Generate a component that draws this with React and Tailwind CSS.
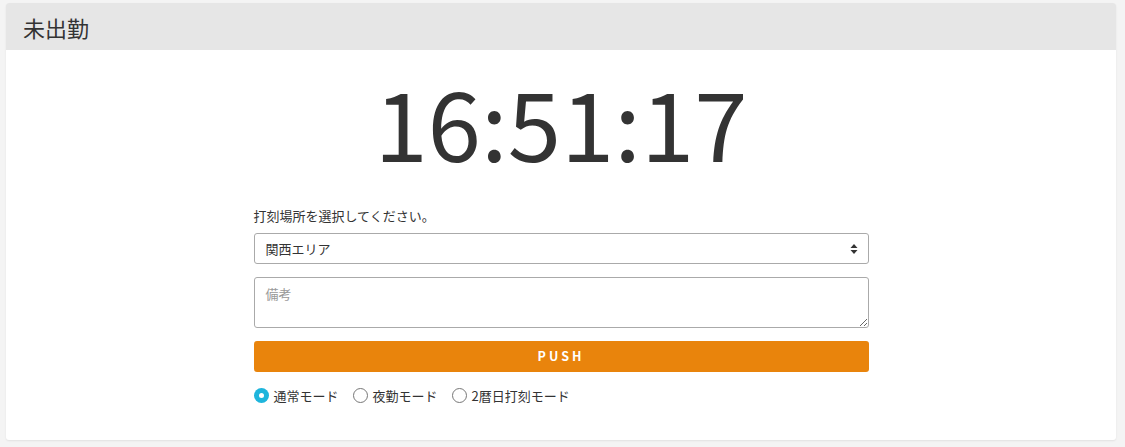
import { useState } from 'react';

const modes = ['通常モード', '夜勤モード', '2暦日打刻モード'];

const App = () => {
  const [mode, setMode] = useState(0);

  return (
    <div
      className="min-h-[447px] bg-[#f4f4f4] pt-[3px] pl-[6px] pr-[9px] pb-[7px]"
      style={{ fontFamily: '"Noto Sans CJK JP", "Noto Sans", sans-serif' }}
    >
      <div className="bg-white rounded-[3px] shadow-[0_1px_2px_rgba(0,0,0,0.08)] overflow-hidden">
        {/* Header */}
        <div className="bg-[#e6e6e6] h-[47px] flex items-center px-[17px]">
          <h1 className="text-[22px] text-[#333] leading-none">未出勤</h1>
        </div>

        {/* Clock */}
        <div className="flex justify-center pt-[11px] pb-[20px]">
          <div className="text-[96px] leading-[120px] text-[#333]">16:51:17</div>
        </div>

        <div className="w-[615px] mx-auto pt-[6px] pb-[34px]">
          <p className="text-[13px] text-[#333] leading-[18px] mb-[8px]">打刻場所を選択してください。</p>

          <div className="relative h-[31px] border border-[#aaa] rounded-[3px] flex items-center px-[11px]">
            <span className="text-[13px] text-[#333]">関西エリア</span>
            <svg className="absolute right-[10px] top-1/2 -translate-y-1/2" width="8" height="11" viewBox="0 0 8 11">
              <path d="M4 0.5 L7.5 4.5 H0.5 Z" fill="#333" />
              <path d="M4 10.5 L7.5 6.5 H0.5 Z" fill="#333" />
            </svg>
          </div>

          <textarea
            placeholder="備考"
            className="mt-[13px] block w-full h-[51px] border border-[#aaa] rounded-[3px] px-[11px] py-[6px] text-[13px] text-[#333] placeholder:text-[#999] outline-none"
          />

          <button className="mt-[13px] w-full h-[31px] bg-[#e9840c] rounded-[3px] text-white text-[12.5px] font-bold tracking-[3px]">
            PUSH
          </button>

          <div className="mt-[14px] flex items-center gap-[14px] text-[13px] text-[#333]">
            {modes.map((m, i) => (
              <label key={m} className="flex items-center gap-[5px] cursor-pointer" onClick={() => setMode(i)}>
                {mode === i ? (
                  <span className="w-[15px] h-[15px] rounded-full bg-[#1eb5dc] flex items-center justify-center">
                    <span className="w-[5px] h-[5px] rounded-full bg-white" />
                  </span>
                ) : (
                  <span className="w-[15px] h-[15px] rounded-full border border-[#777] bg-white" />
                )}
                <span>{m}</span>
              </label>
            ))}
          </div>
        </div>
      </div>
    </div>
  );
};

export default App;
